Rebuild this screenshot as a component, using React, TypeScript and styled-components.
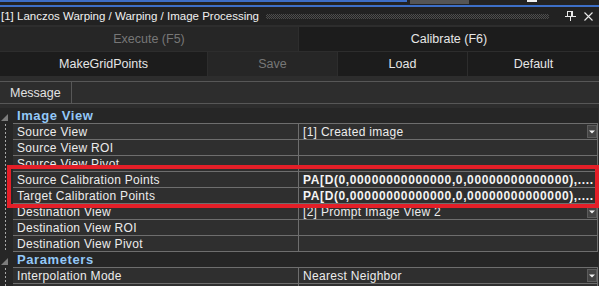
import React from 'react';
import styled, { createGlobalStyle, css } from 'styled-components';

const GlobalStyle = createGlobalStyle`
    html, body {
        margin: 0;
        padding: 0;
        background: #2d2d2d;
        overflow: hidden;
    }
`;

const Panel = styled.div`
    width: 599px;
    height: 286px;
    background: #2d2d2d;
    overflow: hidden;
    font-family: 'Liberation Sans', Arial, sans-serif;
`;

const TopStrip = styled.div`
    height: 7px;
    display: grid;
    grid-template-rows: 4px 1px 2px;
    background: #232323;
`;

const TabEdges = styled.div`
    display: flex;
    align-items: flex-start;
`;

const Edge = styled.div<{ w: number; h: number; color: string; gapLeft?: number }>`
    width: ${p => p.w}px;
    height: ${p => p.h}px;
    background: ${p => p.color};
    margin-left: ${p => p.gapLeft || 0}px;
`;

const BlueLine = styled.div`
    grid-row: 3;
    background: #3d6fc7;
`;

const TitleBar = styled.div`
    height: 18px;
    display: flex;
    align-items: center;
    background: #222222;
    padding: 0 5px 0 1px;
`;

const TitleText = styled.span`
    color: #f0f0f0;
    font-size: 11.5px;
    white-space: nowrap;
`;

const Grip = styled.div`
    flex: 1;
    height: 5px;
    margin: 0 9px 0 7px;
    background: repeating-conic-gradient(#4e4e4e 0 25%, transparent 0 50%) 0 0 / 2px 2px;
`;

const IconBox = styled.div`
    width: 12px;
    height: 12px;
    display: flex;
    align-items: center;
    justify-content: center;
    margin-left: 6px;
`;

const ButtonArea = styled.div`
    margin-top: 2px;
    display: flex;
    flex-direction: column;
    gap: 1px;
`;

const ButtonRow = styled.div<{ cols: string }>`
    display: grid;
    grid-template-columns: ${p => p.cols};
    gap: 1px;
    height: 24px;
`;

const ToolButton = styled.div<{ disabled?: boolean }>`
    display: flex;
    align-items: center;
    justify-content: center;
    font-size: 12.5px;
    background: ${p => (p.disabled ? '#262626' : '#1c1c1c')};
    color: ${p => (p.disabled ? '#777777' : '#e6e6e6')};
`;

const MessageBar = styled.div`
    margin-top: 5px;
    height: 21px;
    display: flex;
    border-top: 1px solid #575757;
    border-bottom: 1px solid #575757;
`;

const MessageTab = styled.div`
    width: 72px;
    display: flex;
    align-items: center;
    padding-left: 10px;
    box-sizing: border-box;
    border-right: 1px solid #575757;
    color: #e2e2e2;
    font-size: 12.5px;
`;

const GridWrap = styled.div`
    position: relative;
    padding-top: 4px;
    padding-right: 1px;
`;

const Row = styled.div`
    display: grid;
    grid-template-columns: 13px 286px 299px;
    height: 16px;
`;

const Gutter = styled.div<{ dotted?: boolean }>`
    background: #262626;
    display: flex;
    align-items: center;
    ${p =>
        p.dotted &&
        css`
            background-image: repeating-linear-gradient(to bottom, #a8a8a8 0 2px, transparent 2px 4px);
            background-size: 1px 100%;
            background-position: 5px 0;
            background-repeat: no-repeat;
        `}
`;

const cellBase = css`
    box-sizing: border-box;
    border-bottom: 1px solid #6e6e6e;
    display: flex;
    align-items: center;
    white-space: nowrap;
    overflow: hidden;
    font-family: 'Liberation Sans', 'DejaVu Sans', sans-serif;
    font-size: 12px;
    letter-spacing: 0.3px;
`;

const NameCell = styled.div`
    ${cellBase};
    background: #2f2f2f;
    border-right: 1px solid #6e6e6e;
    padding-left: 4px;
    color: #ececec;
`;

const ValueCell = styled.div`
    ${cellBase};
    background: #2f2f2f;
    border-right: 1px solid #6e6e6e;
    padding-left: 4px;
    color: #ececec;
`;

const ValueText = styled.span<{ bold?: boolean }>`
    flex: 1;
    overflow: hidden;
    font-weight: ${p => (p.bold ? 700 : 400)};
    letter-spacing: ${p => (p.bold ? '0.62px' : '0.3px')};
    color: ${p => (p.bold ? '#f4f4f4' : '#ececec')};
`;

const DropButton = styled.div`
    width: 10px;
    height: 13px;
    box-sizing: border-box;
    background: #444444;
    border: 1px solid #5c5c5c;
    display: flex;
    align-items: center;
    justify-content: center;
    flex-shrink: 0;
`;

const CategoryLabel = styled.div`
    grid-column: 2 / 4;
    box-sizing: border-box;
    border-bottom: 1px solid #6e6e6e;
    background: #262626;
    padding-left: 4px;
    display: flex;
    align-items: center;
    color: #93c8f8;
    font-weight: 700;
    font-size: 13px;
    letter-spacing: 0.6px;
`;

const Highlight = styled.div`
    position: absolute;
    left: 7px;
    top: 61px;
    width: 592px;
    height: 43px;
    box-sizing: border-box;
    border: 4px solid #e41f28;
    pointer-events: none;
`;

const PinIcon = () => (
    <svg width="11" height="10" viewBox="0 0 11 10">
        <rect x="2.5" y="0.5" width="5" height="5" fill="none" stroke="#e8e8e8" />
        <rect x="6" y="0" width="2" height="6" fill="#e8e8e8" />
        <rect x="0" y="5" width="11" height="1" fill="#e8e8e8" />
        <rect x="5" y="6" width="1" height="4" fill="#e8e8e8" />
    </svg>
);

const CloseIcon = () => (
    <svg width="9" height="9" viewBox="0 0 9 9">
        <path d="M0.5 0.5 L8.5 8.5 M8.5 0.5 L0.5 8.5" stroke="#e8e8e8" strokeWidth="1.1" />
    </svg>
);

const Expander = () => (
    <svg width="7" height="7" viewBox="0 0 7 7" style={{ marginLeft: 1, marginTop: 2 }}>
        <polygon points="7,0 7,7 0,7" fill="#7c7c7c" />
    </svg>
);

const DownArrow = () => (
    <svg width="6" height="4" viewBox="0 0 6 4">
        <polygon points="0,0.5 6,0.5 3,3.5" fill="#f2f2f2" />
    </svg>
);

type Prop = { name: string; value?: string; bold?: boolean; drop?: boolean };

const calib = 'PA[D(0,00000000000000,0,00000000000000),....';

const imageView: Prop[] = [
    { name: 'Source View', value: '[1] Created image', drop: true },
    { name: 'Source View ROI' },
    { name: 'Source View Pivot' },
    { name: 'Source Calibration Points', value: calib, bold: true },
    { name: 'Target Calibration Points', value: calib, bold: true },
    { name: 'Destination View', value: '[2] Prompt Image View 2', drop: true },
    { name: 'Destination View ROI' },
    { name: 'Destination View Pivot' },
];

const parameters: Prop[] = [
    { name: 'Interpolation Mode', value: 'Nearest Neighbor', drop: true },
    { name: '' },
];

const PropRow = ({ p }: { p: Prop }) => (
    <Row>
        <Gutter dotted />
        <NameCell>{p.name}</NameCell>
        <ValueCell>
            <ValueText bold={p.bold}>{p.value}</ValueText>
            {p.drop && (
                <DropButton>
                    <DownArrow />
                </DropButton>
            )}
        </ValueCell>
    </Row>
);

const CategoryRow = ({ label }: { label: string }) => (
    <Row>
        <Gutter>
            <Expander />
        </Gutter>
        <CategoryLabel>{label}</CategoryLabel>
    </Row>
);

export default function App() {
    return (
        <Panel>
            <GlobalStyle />
            <TopStrip>
                <TabEdges>
                    <Edge w={407} h={2} color="#3d6fc7" />
                    <Edge w={59} h={4} color="#555555" gapLeft={3} />
                    <Edge w={10} h={2} color="#f0f0f0" gapLeft={58} />
                </TabEdges>
                <BlueLine />
            </TopStrip>
            <TitleBar>
                <TitleText>[1] Lanczos Warping / Warping / Image Processing</TitleText>
                <Grip />
                <IconBox>
                    <PinIcon />
                </IconBox>
                <IconBox>
                    <CloseIcon />
                </IconBox>
            </TitleBar>
            <ButtonArea>
                <ButtonRow cols="298px 1fr">
                    <ToolButton disabled>Execute (F5)</ToolButton>
                    <ToolButton>Calibrate (F6)</ToolButton>
                </ButtonRow>
                <ButtonRow cols="207px 129px 129px 1fr">
                    <ToolButton>MakeGridPoints</ToolButton>
                    <ToolButton disabled>Save</ToolButton>
                    <ToolButton>Load</ToolButton>
                    <ToolButton>Default</ToolButton>
                </ButtonRow>
            </ButtonArea>
            <MessageBar>
                <MessageTab>Message</MessageTab>
            </MessageBar>
            <GridWrap>
                <CategoryRow label="Image View" />
                {imageView.map(p => (
                    <PropRow key={p.name} p={p} />
                ))}
                <CategoryRow label="Parameters" />
                {parameters.map((p, i) => (
                    <PropRow key={i} p={p} />
                ))}
                <Highlight />
            </GridWrap>
        </Panel>
    );
}
